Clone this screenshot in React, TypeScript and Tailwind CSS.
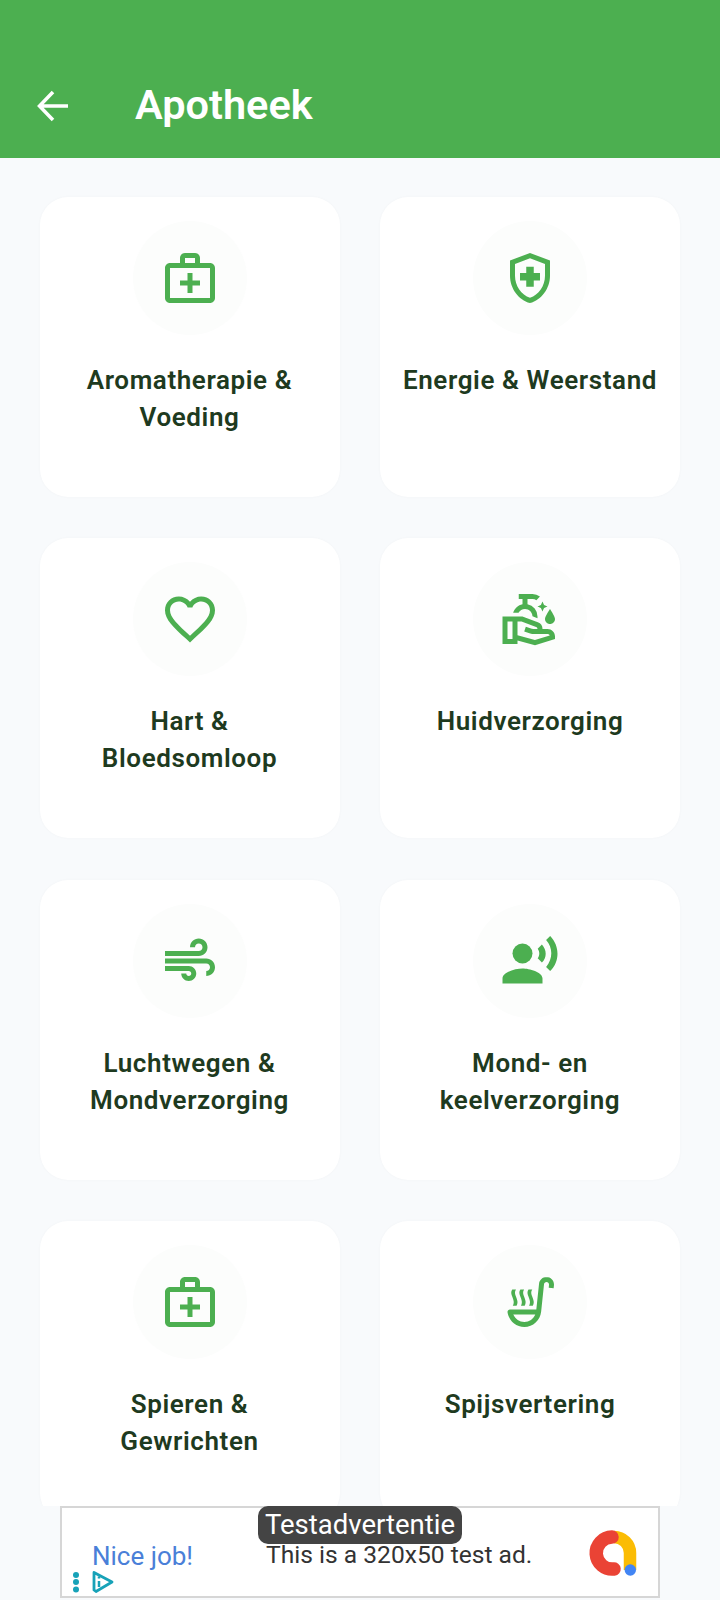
import React from "react";
import {
  MdOutlineMedicalServices,
  MdOutlineHealthAndSafety,
  MdFavoriteBorder,
  MdOutlineCleanHands,
  MdAir,
  MdRecordVoiceOver,
  MdOutlineSoupKitchen,
} from "react-icons/md";

const items = [
  { t: "Aromatherapie & Voeding", I: MdOutlineMedicalServices, w: "max-w-[240px]" },
  { t: "Energie & Weerstand", I: MdOutlineHealthAndSafety, w: "" },
  { t: "Hart & Bloedsomloop", I: MdFavoriteBorder, w: "max-w-[220px]" },
  { t: "Huidverzorging", I: MdOutlineCleanHands, w: "" },
  { t: "Luchtwegen & Mondverzorging", I: MdAir, w: "" },
  { t: "Mond- en keelverzorging", I: MdRecordVoiceOver, w: "max-w-[220px]" },
  { t: "Spieren & Gewrichten", I: MdOutlineMedicalServices, w: "max-w-[200px]" },
  { t: "Spijsvertering", I: MdOutlineSoupKitchen, w: "" },
];

export default function App() {
  return (
    <div className="w-[720px] h-[1600px] flex flex-col overflow-hidden bg-[#f8fafc] font-['Roboto',sans-serif]">
      <header className="h-[158px] shrink-0 bg-[#4caf50] flex items-end pb-[27px] pl-[36px]">
        <svg width="34" height="34" viewBox="0 0 34 34" fill="none" stroke="#ffffff" strokeWidth="3.500" className="mb-[8px]">
          <path d="M32 17H5M17 3L3.500 17 17 31" />
        </svg>
        <h1 className="ml-[65px] text-[41.500px] leading-[52px] font-semibold text-white">Apotheek</h1>
      </header>
      <main className="flex-1 min-h-0 overflow-hidden pl-[39.500px] pr-[40px] pt-[39px]">
        <div className="grid grid-cols-2 gap-x-[40.500px] gap-y-[41.300px]">
          {items.map(({ t, I, w }) => (
            <div
              key={t}
              className="h-[300px] rounded-[28px] bg-white shadow-[0_0_3px_rgba(0,0,0,0.03)] flex flex-col items-center pt-[24px]"
            >
              <div className="w-[114px] h-[114px] rounded-full bg-[#fcfdfc] flex items-center justify-center shrink-0">
                <I size={60} color="#4caf50" />
              </div>
              <p className={`mt-[27px] px-[14px] text-center text-[26px] leading-[37px] font-semibold tracking-[0.6px] text-[#1e3a20] ${w}`}>
                {t}
              </p>
            </div>
          ))}
        </div>
      </main>
      <div className="h-[92px] shrink-0 mx-[60px] mb-[2px] relative bg-white border-2 border-[#d6d6d6] flex items-center pl-[30px] pr-[18px]">
        <span className="w-[174px] text-[26px] text-[#4a7fd8] pt-[8px]">Nice job!</span>
        <span className="text-[24.600px] text-[#333333] pt-[6px]">This is a 320x50 test ad.</span>
        <svg width="52" height="52" viewBox="0 0 52 52" fill="none" className="ml-auto mt-[2px]">
          <path d="M26 10A16 16 0 0 1 42 26V43" stroke="#fbbc04" strokeWidth="12.500" strokeLinecap="butt" />
          <path d="M24 10.100A16 16 0 1 0 26 42" stroke="#ea4335" strokeWidth="13.500" strokeLinecap="round" />
          <circle cx="42.300" cy="43" r="5.700" fill="#4285f4" />
        </svg>
        <div className="absolute left-[196px] top-[-2px] h-[38px] w-[204px] rounded-[10px] bg-[#444444] text-white text-[27.500px] leading-[38px] text-center">
          Testadvertentie
        </div>
        <div className="absolute left-[10px] bottom-[2px] flex items-center gap-[11px]">
          <svg width="8" height="22" viewBox="0 0 8 22" fill="#17a2b8">
            <circle cx="4" cy="4" r="3" />
            <circle cx="4" cy="11" r="3" />
            <circle cx="4" cy="18.500" r="3" />
          </svg>
          <svg width="24" height="24" viewBox="0 0 24 24" fill="none" stroke="#17a2b8" strokeWidth="2.800">
            <path d="M3 2.500L21 12 5 21.500 3 20z" strokeLinejoin="round" />
            <path d="M8 11v6M8 6.500v2" strokeWidth="2.500" />
          </svg>
        </div>
      </div>
    </div>
  );
}
